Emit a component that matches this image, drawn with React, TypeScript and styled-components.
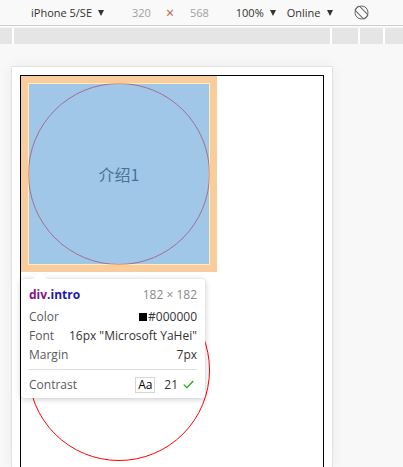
import React from "react";
import styled, { createGlobalStyle } from "styled-components";

const Global = createGlobalStyle`
  html, body {
    margin: 0;
    padding: 0;
    width: 403px;
    height: 467px;
    overflow: hidden;
    background: #f8f8f8;
  }
  body {
    font-family: "Open Sans", "Noto Sans", sans-serif;
  }
`;

const Shell = styled.div`
  display: flex;
  flex-direction: column;
  height: 467px;
  background: #f8f8f8;
`;

const Toolbar = styled.div`
  height: 25px;
  border-bottom: 1px solid #d0d0d0;
  background: #f9f9f9;
  display: flex;
  align-items: center;
  padding-left: 31px;
  font-size: 11px;
  color: #333;
`;

const ToolItem = styled.span<{ $gap?: number; $muted?: boolean; $accent?: boolean }>`
  margin-left: ${(p) => p.$gap ?? 0}px;
  color: ${(p) => (p.$accent ? "#b0603f" : p.$muted ? "#a0a0a0" : "#333")};
  font-size: ${(p) => (p.$accent ? "14px" : "11px")};
  line-height: 25px;
  white-space: nowrap;
`;

const Caret = styled.span`
  width: 0;
  height: 0;
  margin-left: 6px;
  border-left: 3.5px solid transparent;
  border-right: 3.5px solid transparent;
  border-top: 6px solid #333;
`;

const IconSlot = styled.span<{ $gap: number }>`
  margin-left: ${(p) => p.$gap}px;
  display: flex;
  align-items: center;
`;

const Ruler = styled.div`
  margin-top: 2px;
  height: 16px;
  display: flex;
  gap: 2px;
  background: #ffffff;
`;

const RulerSeg = styled.div<{ $w?: number }>`
  background: #e5e5e5;
  ${(p) => (p.$w ? `width: ${p.$w}px;` : "flex: 1;")}
`;

const Canvas = styled.div`
  flex: 1;
  display: flex;
  padding: 22px 0 0 11px;
  background: #f8f8f8;
  overflow: hidden;
`;

const Frame = styled.div`
  width: 320px;
  border: 1px solid #e2e2e2;
  border-bottom: none;
  background: #ffffff;
  box-shadow: 0 0 14px rgba(0, 0, 0, 0.06);
`;

const Viewport = styled.div`
  padding: 8px;
`;

const PageBody = styled.div`
  border: 1px solid #000;
  min-height: 520px;
  display: flex;
  flex-direction: column;
  align-items: flex-start;
`;

const Intro = styled.div`
  position: relative;
  box-sizing: border-box;
  width: 182px;
  height: 182px;
  margin: 7px;
  border: 1px solid #ff0000;
  border-radius: 50%;
  display: flex;
  align-items: center;
  justify-content: center;
  font-family: "Noto Sans CJK SC", "Noto Sans", sans-serif;
  font-size: 16px;
  color: #000;
`;

const MarginBox = styled.div`
  position: absolute;
  top: -8px;
  left: -8px;
  width: 196px;
  height: 196px;
  box-sizing: border-box;
  border: 7px solid rgba(246, 178, 107, 0.66);
  z-index: 5;
  display: flex;
`;

const BorderBox = styled.div`
  flex: 1;
  border: 1px solid rgba(255, 229, 153, 0.66);
  background: rgba(111, 168, 220, 0.66);
  background-clip: padding-box;
`;

const Tooltip = styled.div`
  position: absolute;
  left: -8px;
  top: 195px;
  width: 184px;
  height: 119px;
  box-sizing: border-box;
  padding: 6px 8px 5px;
  background: #fff;
  border-radius: 3px;
  box-shadow: 0 1px 6px rgba(0, 0, 0, 0.22), 0 0 1px rgba(0, 0, 0, 0.12);
  z-index: 10;
  font-family: "Open Sans", "Noto Sans", sans-serif;
  font-size: 12px;
  color: #333;
`;

const Arrow = styled.div`
  position: absolute;
  top: -6px;
  left: 12px;
  width: 0;
  height: 0;
  border-left: 7px solid transparent;
  border-right: 7px solid transparent;
  border-bottom: 6px solid #fff;
`;

const Header = styled.div`
  display: flex;
  justify-content: space-between;
  line-height: 19px;
  margin-bottom: 3px;
`;

const Tag = styled.span<{ $kind: "name" | "cls" }>`
  font-weight: 700;
  color: ${(p) => (p.$kind === "name" ? "#881280" : "#1a1aa6")};
`;

const Dim = styled.span`
  color: #888;
`;

const Row = styled.div`
  display: flex;
  justify-content: space-between;
  align-items: center;
  line-height: 19px;
`;

const Label = styled.span`
  color: #5a5a5a;
`;

const Value = styled.span`
  color: #333;
  display: flex;
  align-items: center;
`;

const Swatch = styled.span`
  width: 8px;
  height: 8px;
  background: #000;
  margin-right: 1px;
`;

const Divider = styled.div`
  height: 1px;
  background: #dcdcdc;
  margin-top: 5px;
`;

const ContrastRow = styled.div`
  display: flex;
  align-items: center;
  line-height: 19px;
  padding-top: 5px;
`;

const AaBox = styled.span`
  margin-left: auto;
  width: 20px;
  height: 16px;
  box-sizing: border-box;
  border: 1px solid #d6d6d6;
  display: flex;
  align-items: center;
  justify-content: center;
  font-size: 12px;
  line-height: 14px;
  color: #000;
`;

const Ratio = styled.span`
  margin-left: 9px;
  color: #333;
`;

const Check = styled.span`
  margin-left: 5px;
  margin-right: 3px;
  display: flex;
`;

const RotateIcon = () => (
  <svg width="15" height="15" viewBox="0 0 15 15" fill="none" stroke="#666" strokeWidth="1">
    <circle cx="7.5" cy="7.5" r="6.5" />
    <rect x="4.5" y="0.8" width="6" height="13.4" rx="1.5" transform="rotate(-45 7.5 7.5)" />
  </svg>
);

export default function App() {
  return (
    <>
      <Global />
      <Shell>
        <Toolbar>
          <ToolItem>iPhone 5/SE</ToolItem>
          <Caret />
          <ToolItem $gap={28} $muted>
            320
          </ToolItem>
          <ToolItem $gap={15} $accent>
            ×
          </ToolItem>
          <ToolItem $gap={16} $muted>
            568
          </ToolItem>
          <ToolItem $gap={27}>100%</ToolItem>
          <Caret />
          <ToolItem $gap={11}>Online</ToolItem>
          <Caret />
          <IconSlot $gap={21}>
            <RotateIcon />
          </IconSlot>
        </Toolbar>
        <Ruler>
          <RulerSeg $w={12} />
          <RulerSeg $w={316} />
          <RulerSeg $w={26} />
          <RulerSeg $w={23} />
          <RulerSeg />
        </Ruler>
        <Canvas>
          <Frame>
            <Viewport>
              <PageBody>
                <Intro>
                  介绍1
                  <MarginBox>
                    <BorderBox />
                  </MarginBox>
                  <Tooltip>
                    <Arrow />
                    <Header>
                      <span>
                        <Tag $kind="name">div</Tag>
                        <Tag $kind="cls">.intro</Tag>
                      </span>
                      <Dim>182 × 182</Dim>
                    </Header>
                    <Row>
                      <Label>Color</Label>
                      <Value>
                        <Swatch />
                        #000000
                      </Value>
                    </Row>
                    <Row>
                      <Label>Font</Label>
                      <Value>16px "Microsoft YaHei"</Value>
                    </Row>
                    <Row>
                      <Label>Margin</Label>
                      <Value>7px</Value>
                    </Row>
                    <Divider />
                    <ContrastRow>
                      <Label>Contrast</Label>
                      <AaBox>Aa</AaBox>
                      <Ratio>21</Ratio>
                      <Check>
                        <svg width="11" height="9" viewBox="0 0 11 9" fill="none" stroke="#1ea51e" strokeWidth="1.3">
                          <polyline points="0.7,4.6 3.9,7.6 10.3,1" />
                        </svg>
                      </Check>
                    </ContrastRow>
                  </Tooltip>
                </Intro>
                <Intro>介绍2</Intro>
              </PageBody>
            </Viewport>
          </Frame>
        </Canvas>
      </Shell>
    </>
  );
}
